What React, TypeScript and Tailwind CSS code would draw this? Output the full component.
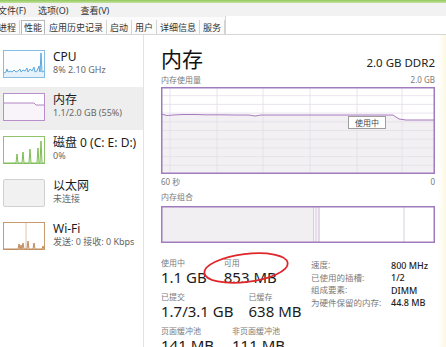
import React from 'react';

const font = "font-['Noto_Sans','Noto_Sans_CJK_SC',sans-serif]";

const tabs = ['进程', '性能', '应用历史记录', '启动', '用户', '详细信息', '服务'];

const CpuThumb = () => (
  <svg width="42" height="28" viewBox="0 0 42 28">
    <rect x="0.5" y="0.5" width="41" height="27" fill="#fbfdff" stroke="#86bde3" />
    <path
      d="M1 23 L3 22 L4 19 L5 22 L7 21 L9 22 L11 20 L13 22 L15 21 L17 19 L18 22 L20 20 L22 21 L24 18 L25 22 L27 19 L29 21 L31 17 L32 22 L34 21 L36 16 L37 22 L38 3 L39 22 L41 21 L41 27 L1 27 Z"
      fill="#e6f2fb"
    />
    <path
      d="M1 23 L3 22 L4 19 L5 22 L7 21 L9 22 L11 20 L13 22 L15 21 L17 19 L18 22 L20 20 L22 21 L24 18 L25 22 L27 19 L29 21 L31 17 L32 22 L34 21 L36 16 L37 22 L38 3 L39 22 L41 21"
      fill="none"
      stroke="#4d9fd8"
      strokeWidth="0.9"
    />
  </svg>
);

const MemThumb = () => (
  <svg width="42" height="28" viewBox="0 0 42 28">
    <rect x="0.5" y="0.5" width="41" height="27" fill="#ffffff" stroke="#b88fca" />
    <path d="M1 10 L31 10 L33 12 L41 12 L41 27 L1 27 Z" fill="#f8f4f9" />
    <path d="M1 10 L31 10 L33 12 L41 12" fill="none" stroke="#a879bd" strokeWidth="0.9" />
  </svg>
);

const DiskThumb = () => (
  <svg width="42" height="28" viewBox="0 0 42 28">
    <rect x="0.5" y="0.5" width="41" height="27" fill="#ffffff" stroke="#8fc46c" />
    <path
      d="M1 27 L13 27 L14 18 L15 27 L19 27 L20 16 L21 27 L26 27 L27 13 L28 27 L34 27 L35 12 L36 27 L37 27 L38 5 L39 27 L41 27"
      fill="#eef7e8"
      stroke="#72b545"
      strokeWidth="0.9"
    />
  </svg>
);

const EthThumb = () => (
  <svg width="42" height="28" viewBox="0 0 42 28">
    <rect x="0.5" y="0.5" width="41" height="27" rx="1.5" fill="#f1f1f1" stroke="#d0d0d0" />
  </svg>
);

const WifiThumb = () => (
  <svg width="42" height="28" viewBox="0 0 42 28">
    <rect x="0.5" y="0.5" width="41" height="27" fill="#ffffff" stroke="#c99a6c" />
    <line x1="23" y1="1" x2="23" y2="27" stroke="#d8b795" strokeWidth="0.8" />
    <path
      d="M1 27 L15 27 L16 22 L17 27 L18 23 L19 27 L20 21 L21 27 L24 27 L25 19 L26 27 L30 27 L31 21 L32 27 L39 27 L40 24 L41 27"
      fill="#f6ece2"
      stroke="#b98250"
      strokeWidth="0.9"
    />
  </svg>
);

const sideItems = [
  { title: 'CPU', sub: '8% 2.10 GHz', thumb: <CpuThumb />, active: false },
  { title: '内存', sub: '1.1/2.0 GB (55%)', thumb: <MemThumb />, active: true },
  { title: '磁盘 0 (C: E: D:)', sub: '0%', thumb: <DiskThumb />, active: false },
  { title: '以太网', sub: '未连接', thumb: <EthThumb />, active: false },
  { title: 'Wi-Fi', sub: '发送: 0 接收: 0 Kbps', thumb: <WifiThumb />, active: false },
];

const vGrid = [9, 56, 102, 149, 196, 241];
const hGrid = [8.7, 17.4, 26.1, 34.8, 43.5, 52.2, 60.9, 69.6, 78.3];
const usageLine =
  'M0 27 L6 28.5 L12 28 L22 27.5 L34 27.5 L45 27.8 L60 27.8 L75 28 L88 28 L94 29 L100 28 L120 28 L150 28 L187 28 L226 28 L232 28 L238 32 L245 33 L274 33';

const UsageChart = () => (
  <div className="relative w-[274px] h-[87px]">
    <svg width="274" height="87" viewBox="0 0 274 87" className="block">
      <rect x="0" y="0" width="274" height="87" fill="#ffffff" />
      <path d={`${usageLine} L274 87 L0 87 Z`} fill="#f3f0f4" />
      {vGrid.map((x) => (
        <line key={`v${x}`} x1={x} y1="0" x2={x} y2="87" stroke="#e4dde8" strokeWidth="0.8" />
      ))}
      {hGrid.map((y) => (
        <line key={`h${y}`} x1="0" y1={y} x2="274" y2={y} stroke="#e4dde8" strokeWidth="0.8" />
      ))}
      <path d={usageLine} fill="none" stroke="#a679bd" strokeWidth="1" />
      <rect x="0.75" y="0.75" width="272.5" height="85.5" fill="none" stroke="#a27bbd" strokeWidth="1.5" />
    </svg>
    <div className="absolute left-[187px] top-[29px] w-[38px] h-[13px] border border-[#9d9d9d] bg-white flex items-center justify-center text-[8px] leading-none text-[#444]">
      使用中
    </div>
  </div>
);

const CompositionBar = () => (
  <svg width="274" height="37" viewBox="0 0 274 37" className="block">
    <rect x="0" y="0" width="274" height="37" fill="#ffffff" />
    <rect x="1" y="1" width="151" height="35" fill="#f1eff2" />
    <rect x="152" y="1" width="6" height="35" fill="#f7f4f8" />
    <line x1="152.5" y1="1" x2="152.5" y2="36" stroke="#cfc2d6" strokeWidth="0.8" />
    <line x1="155" y1="1" x2="155" y2="36" stroke="#cfc2d6" strokeWidth="0.8" />
    <line x1="158" y1="1" x2="158" y2="36" stroke="#b9a4c5" strokeWidth="0.8" />
    <line x1="243" y1="1" x2="243" y2="36" stroke="#cfc2d6" strokeWidth="0.8" />
    <rect x="0.75" y="0.75" width="272.5" height="35.5" fill="none" stroke="#a27bbd" strokeWidth="1.5" />
  </svg>
);

const Stat = ({ label, value }: { label: string; value: string }) => (
  <div className="flex flex-col">
    <span className="text-[8px] leading-[10px] text-[#7a7a7a] whitespace-nowrap">{label}</span>
    <span className="text-[15px] leading-[19px] text-[#1b1b1b] whitespace-nowrap">{value}</span>
  </div>
);

const details = [
  ['速度:', '800 MHz'],
  ['已使用的插槽:', '1/2'],
  ['组成要素:', 'DIMM'],
  ['为硬件保留的内存:', '44.8 MB'],
];

export default function App() {
  return (
    <div className={`${font} relative w-[446px] h-[347px] overflow-hidden bg-white text-[#1b1b1b]`}>
      <div className="h-[3px] bg-gradient-to-b from-[#93c75b] to-[#c4e2a0]" />

      <div className="h-[14px] bg-[#f2f2f2] flex items-center gap-[12px] -ml-[2px] text-[9px] leading-none text-[#333]">
        <span>文件(F)</span>
        <span>选项(O)</span>
        <span>查看(V)</span>
      </div>

      <div className="h-[18px] flex items-end border-b border-[#d6d6d6] bg-[#fbfbfb] -ml-[5px]">
        {tabs.map((t) => (
          <div
            key={t}
            className={
              t === '性能'
                ? 'h-[14px] px-[2px] mx-[1px] flex items-center border border-b-0 border-[#b9b9b9] bg-white text-[9px] leading-none text-[#333]'
                : 'h-[14px] px-[3px] flex items-center border-r border-[#d4d4d4] text-[9px] leading-none text-[#333]'
            }
          >
            {t}
          </div>
        ))}
        <div className="flex-1 h-[18px] border-l border-[#d4d4d4] bg-white" />
      </div>

      <div className="flex h-[312px]">
        <div className="w-[144px] shrink-0 border-r border-[#e3e3e3] pt-[9px]">
          {sideItems.map((it) => (
            <div
              key={it.title}
              className={`h-[43px] flex items-start gap-[8px] pl-[3px] pt-[6px] ${it.active ? 'bg-[#eeeeee]' : ''}`}
            >
              <div className="shrink-0">{it.thumb}</div>
              <div className="flex flex-col -mt-[1px]">
                <span className="text-[12px] leading-[15px] text-[#1b1b1b] whitespace-nowrap">{it.title}</span>
                <span className="text-[9px] leading-[12px] text-[#666] whitespace-nowrap">{it.sub}</span>
              </div>
            </div>
          ))}
        </div>

        <div className="flex-1 pl-[17px] pt-[11px]">
          <div className="w-[274px] flex items-baseline justify-between">
            <span className="text-[21px] leading-[26px] text-[#111]">内存</span>
            <span className="text-[11.5px] leading-[14px] text-[#222]">2.0 GB DDR2</span>
          </div>
          <div className="w-[274px] mt-[3px] flex justify-between text-[8px] leading-[10px] text-[#7a7a7a]">
            <span>内存使用量</span>
            <span>2.0 GB</span>
          </div>
          <div className="mt-[2px]">
            <UsageChart />
          </div>
          <div className="w-[274px] mt-[3px] flex justify-between text-[8px] leading-[10px] text-[#7a7a7a]">
            <span>60 秒</span>
            <span>0</span>
          </div>
          <div className="mt-[5px] text-[8px] leading-[10px] text-[#7a7a7a]">内存组合</div>
          <div className="mt-[4px]">
            <CompositionBar />
          </div>

          <div className="mt-[15px] flex">
            <div className="w-[150px] flex flex-col gap-[5px]">
              <div className="flex gap-[17px]">
                <Stat label="使用中" value="1.1 GB" />
                <Stat label="可用" value="853 MB" />
              </div>
              <div className="flex gap-[15px]">
                <Stat label="已提交" value="1.7/3.1 GB" />
                <Stat label="已缓存" value="638 MB" />
              </div>
              <div className="flex gap-[18px]">
                <Stat label="页面缓冲池" value="141 MB" />
                <Stat label="非页面缓冲池" value="111 MB" />
              </div>
            </div>
            <div className="flex flex-col pt-[1px]">
              {details.map(([k, v]) => (
                <div key={k} className="flex h-[12.5px] items-center">
                  <span className="w-[80px] text-[8.5px] leading-none text-[#7a7a7a] whitespace-nowrap">{k}</span>
                  <span className="text-[9px] leading-none text-[#222] font-medium whitespace-nowrap">{v}</span>
                </div>
              ))}
            </div>
          </div>
        </div>

        <div className="w-[8px] shrink-0 bg-gradient-to-r from-white to-[#fdf8e2]" />
      </div>

      <svg
        className="absolute left-[199px] top-[249px] pointer-events-none"
        width="94"
        height="38"
        viewBox="0 0 94 38"
      >
        <ellipse
          cx="47"
          cy="19"
          rx="42"
          ry="14"
          transform="rotate(-7 47 19)"
          fill="none"
          stroke="#e0262b"
          strokeWidth="1.8"
        />
      </svg>
    </div>
  );
}
